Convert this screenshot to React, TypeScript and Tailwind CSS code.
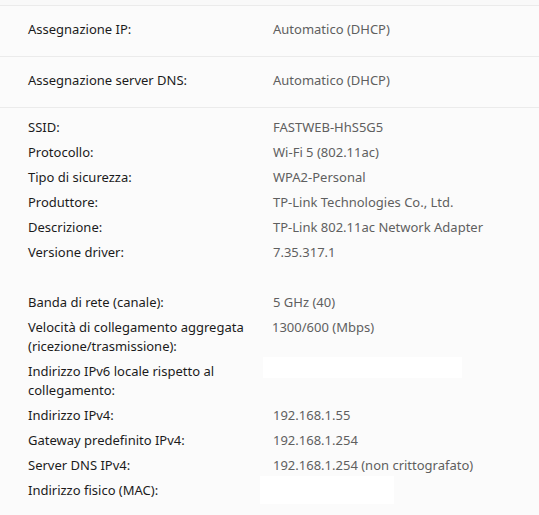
import React from "react";

const font = { fontFamily: '"Noto Sans", "Open Sans", sans-serif' };

function Row({ label, value }: { label: React.ReactNode; value?: React.ReactNode }) {
  return (
    <div className="flex leading-[19px]">
      <div className="w-[245px] shrink-0 pr-[10px] text-[#1b1b1b]">{label}</div>
      <div className="text-[#5f5f5f]">{value}</div>
    </div>
  );
}

export default function App() {
  return (
    <div className="w-[539px] h-[515px] overflow-hidden bg-[#fbfbfb] text-[13px]" style={font}>
      <div className="h-[5px] bg-[#f9f9f9]" />
      <div className="border-t border-[#ebebeb] h-[51px] flex items-center pl-[28px] pb-[3px]">
        <div className="w-[245px] text-[#1b1b1b]">Assegnazione IP:</div>
        <div className="text-[#5f5f5f]">Automatico (DHCP)</div>
      </div>
      <div className="border-t border-[#ebebeb] h-[51px] flex items-center pl-[28px] pb-[3px]">
        <div className="w-[245px] text-[#1b1b1b]">Assegnazione server DNS:</div>
        <div className="text-[#5f5f5f]">Automatico (DHCP)</div>
      </div>
      <div className="border-t border-[#ebebeb] pl-[28px] pt-[10px] flex flex-col gap-[6px]">
        <Row label="SSID:" value="FASTWEB-HhS5G5" />
        <Row label="Protocollo:" value="Wi-Fi 5 (802.11ac)" />
        <Row label="Tipo di sicurezza:" value="WPA2-Personal" />
        <Row label="Produttore:" value="TP-Link Technologies Co., Ltd." />
        <Row label="Descrizione:" value="TP-Link 802.11ac Network Adapter" />
        <Row label="Versione driver:" value="7.35.317.1" />
        <div className="h-[19px]" />
        <Row label="Banda di rete (canale):" value="5 GHz (40)" />
        <Row
          label="Velocità di collegamento aggregata (ricezione/trasmissione):"
          value={<span className="-ml-px">1300/600 (Mbps)</span>}
        />
        <Row
          label="Indirizzo IPv6 locale rispetto al collegamento:"
          value={<div className="relative -left-[10px] -top-[5px] w-[199px] h-[21px] bg-white" />}
        />
        <Row label="Indirizzo IPv4:" value="192.168.1.55" />
        <Row label="Gateway predefinito IPv4:" value="192.168.1.254" />
        <Row label="Server DNS IPv4:" value="192.168.1.254 (non crittografato)" />
        <Row
          label="Indirizzo fisico (MAC):"
          value={<div className="relative -left-[13px] -top-[5px] w-[134px] h-[28px] bg-white" />}
        />
      </div>
    </div>
  );
}
